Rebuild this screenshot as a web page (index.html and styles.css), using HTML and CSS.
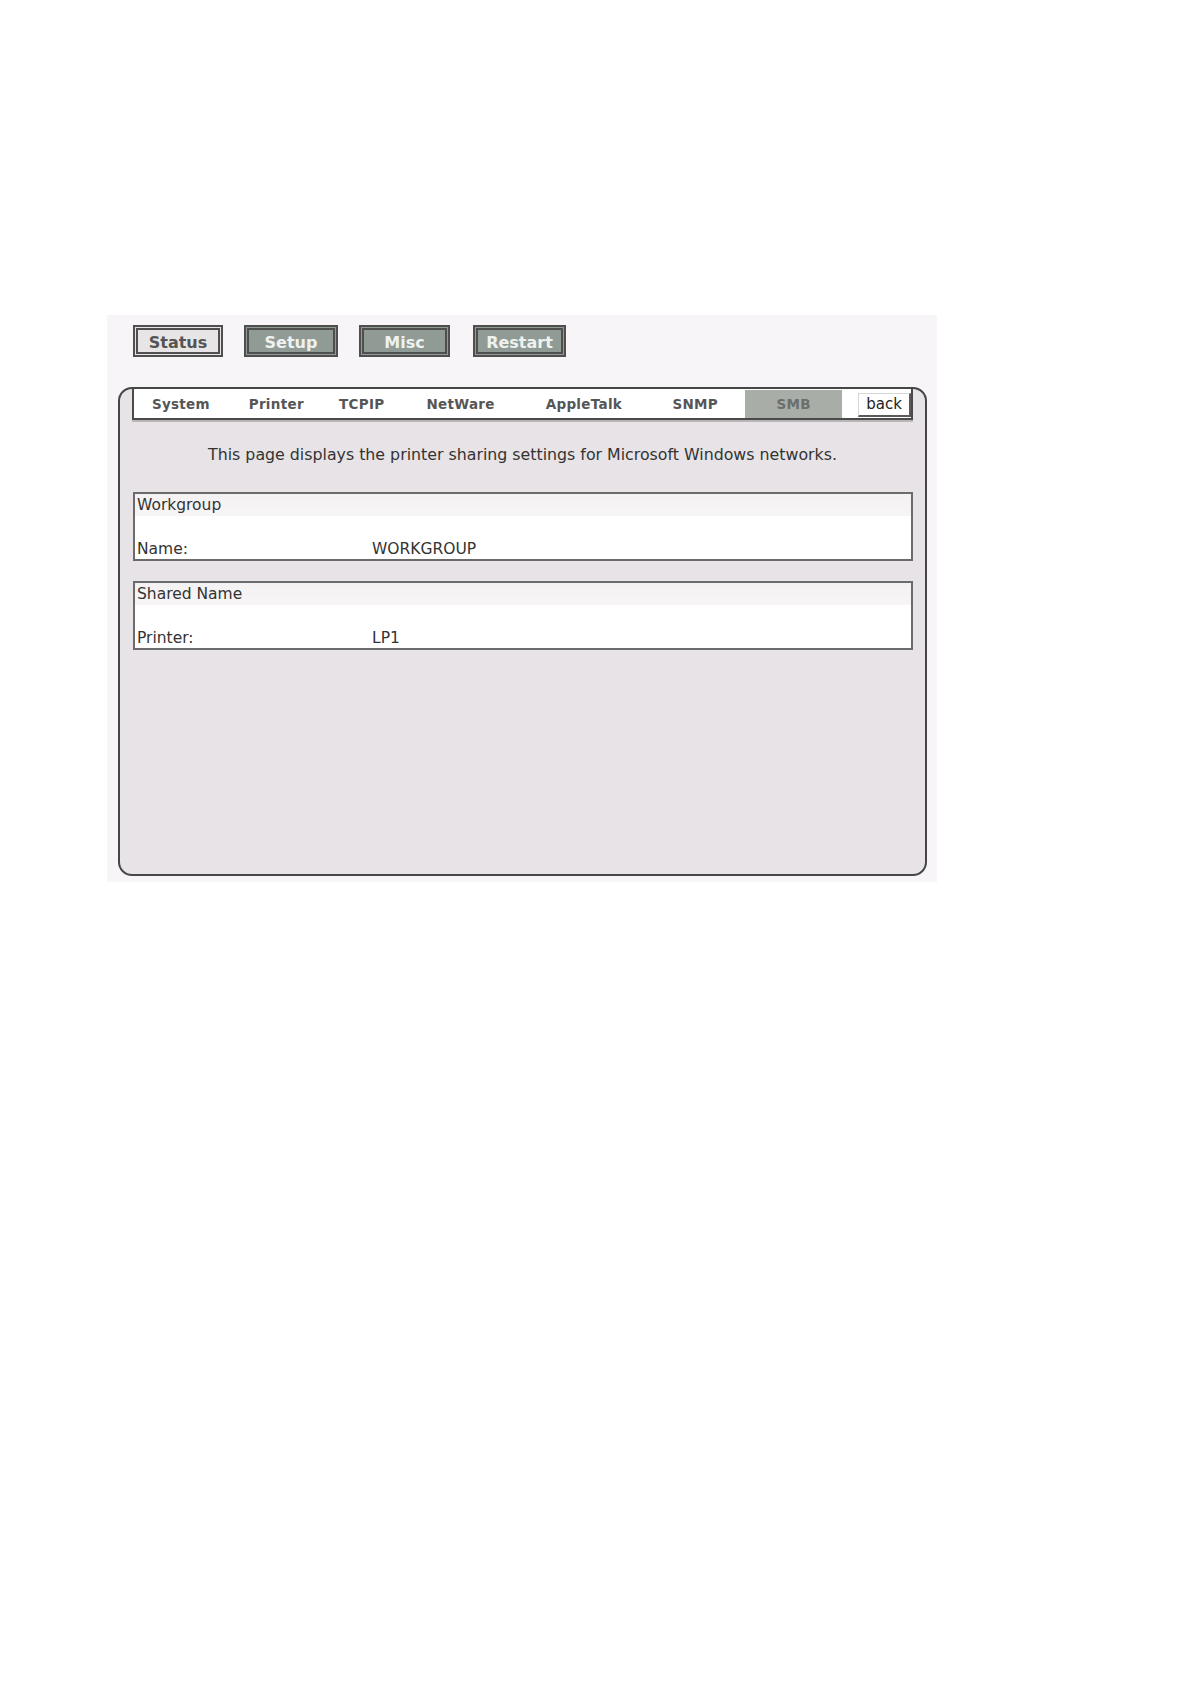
FILE: index.html
```html
<!DOCTYPE html>
<html>
<head>
<meta charset="utf-8">
<title>SMB</title>
<link rel="stylesheet" href="styles.css">
</head>
<body>
<div class="page">
  <div class="panel">
    <div class="topnav">
      <div class="btn btn-status">Status</div>
      <div class="btn btn-setup">Setup</div>
      <div class="btn btn-misc">Misc</div>
      <div class="btn btn-restart">Restart</div>
    </div>
    <div class="frame">
      <div class="tabbar">
        <div class="tab t-system">System</div>
        <div class="tab t-printer">Printer</div>
        <div class="tab t-tcpip">TCPIP</div>
        <div class="tab t-netware">NetWare</div>
        <div class="tab t-appletalk">AppleTalk</div>
        <div class="tab t-snmp">SNMP</div>
        <div class="tab t-smb active">SMB</div>
        <div class="back">back</div>
      </div>
      <p class="desc">This page displays the printer sharing settings for Microsoft Windows networks.</p>
      <div class="box">
        <div class="box-head">Workgroup</div>
        <div class="box-gap"></div>
        <div class="box-row"><span class="lbl">Name:</span><span class="val">WORKGROUP</span></div>
      </div>
      <div class="box">
        <div class="box-head">Shared Name</div>
        <div class="box-gap"></div>
        <div class="box-row"><span class="lbl">Printer:</span><span class="val">LP1</span></div>
      </div>
    </div>
  </div>
</div>
</body>
</html>
```

FILE: styles.css
```css
html, body {
  margin: 0;
  padding: 0;
  background: #ffffff;
}

body {
  font-family: "DejaVu Sans", Verdana, sans-serif;
  color: #333333;
}

.page {
  padding-top: 315px;
  padding-left: 107px;
}

.panel {
  width: 830px;
  height: 567px;
  box-sizing: border-box;
  background: #f7f5f7;
  padding-top: 10px;
  padding-left: 11px;
}

.topnav {
  display: flex;
  margin-left: 15px;
  height: 32px;
}

.btn {
  box-sizing: border-box;
  height: 32px;
  border: 5px double #4f4f4f;
  font-weight: bold;
  font-size: 16px;
  line-height: 25px;
  text-align: center;
}

.btn-status {
  width: 90px;
  background: #e8e5e7;
  color: #545454;
}

.btn-setup,
.btn-misc,
.btn-restart {
  background: #919b95;
  color: #eef2ef;
}

.btn-setup { width: 94px; margin-left: 21px; }
.btn-misc { width: 91px; margin-left: 21px; }
.btn-restart { width: 93px; margin-left: 23px; }

.frame {
  margin-top: 30px;
  width: 809px;
  height: 489px;
  box-sizing: border-box;
  border: 2px solid #464646;
  border-radius: 14px;
  background: #e7e3e6;
}

.tabbar {
  display: flex;
  align-items: center;
  margin-left: 12px;
  width: 781px;
  height: 31px;
  box-sizing: border-box;
  background: #ffffff;
  border-left: 2px solid #4a4a4a;
  border-right: 2px solid #4a4a4a;
  border-bottom: 2px solid #4a4a4a;
  box-shadow: 0 2px 0 #b9b6b8;
}

.tab {
  height: 28px;
  line-height: 28px;
  text-align: center;
  font-weight: bold;
  font-size: 13.5px;
  letter-spacing: 0.3px;
  color: #565656;
}

.t-system { width: 94px; }
.t-printer { width: 97px; }
.t-tcpip { width: 74px; }
.t-netware { width: 124px; }
.t-appletalk { width: 123px; }
.t-snmp { width: 100px; }
.t-smb { width: 97px; }

.tab.active {
  background: #a9ada8;
  color: #6b6f6b;
}

.back {
  margin-left: 16px;
  width: 53px;
  height: 24px;
  box-sizing: border-box;
  margin-top: 2px;
  background: #ffffff;
  border-top: 1px solid #d6d6d6;
  border-left: 1px solid #d6d6d6;
  border-right: 2px solid #5a5a5a;
  border-bottom: 2px solid #5a5a5a;
  font-size: 15px;
  line-height: 20px;
  text-align: center;
  color: #222222;
}

.desc {
  margin: 25px 0 0 0;
  font-size: 15.8px;
  line-height: 20px;
  text-align: center;
  color: #333333;
}

.box {
  margin: 27px 0 0 13px;
  width: 780px;
  box-sizing: border-box;
  border: 2px solid #6b6b6b;
  background: #ffffff;
}

.box + .box {
  margin-top: 20px;
}

.box-head {
  height: 22px;
  line-height: 23px;
  padding-left: 2px;
  font-size: 15.5px;
  background: linear-gradient(#f3f1f2, #f7f5f6);
  color: #333333;
}

.box-gap {
  height: 21px;
}

.box-row {
  display: flex;
  height: 22px;
  line-height: 25px;
  font-size: 15.5px;
  padding-left: 2px;
  color: #333333;
}

.lbl {
  width: 235px;
}
```
